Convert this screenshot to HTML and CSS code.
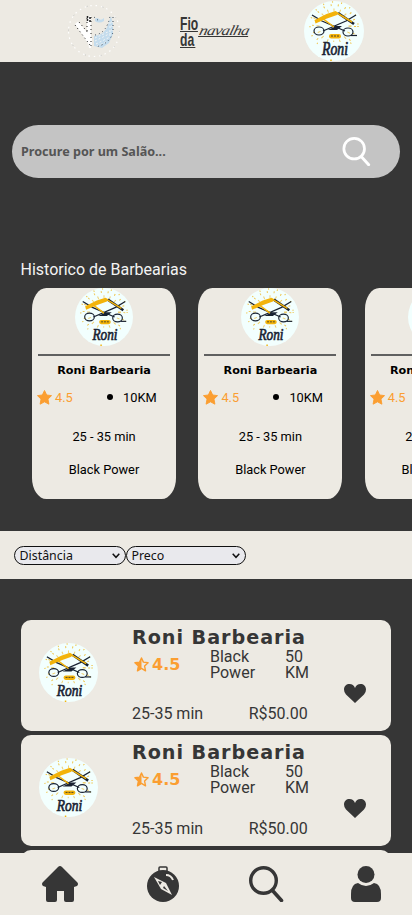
FILE: index.html
```html
<!DOCTYPE html>
<html lang="pt-BR">
<head>
<meta charset="utf-8">
<meta name="viewport" content="width=device-width, initial-scale=1">
<title>Fio da navalha</title>
<link rel="stylesheet" href="styles.css">
</head>
<body>
<svg class="defs" aria-hidden="true">
  <symbol id="roni" viewBox="0 0 60 60">
    <circle cx="30" cy="30" r="30" fill="#f2fffe"/>
    <g fill="none" stroke="#efb51e">
      <circle cx="30" cy="25" r="16" stroke-width="3" stroke-dasharray="1 5.2" opacity=".65"/>
      <circle cx="30" cy="25" r="21" stroke-width="2" stroke-dasharray="1 6.3" opacity=".8"/>
      <circle cx="30" cy="25" r="24" stroke-width="1.5" stroke-dasharray="1 8.2" opacity=".8"/>
    </g>
    <path d="M14 41h32v15H14z" fill="#f2fffe"/>
    <path d="M8 14l10 6 23 10M52 14l-10 6-23 10" fill="none" stroke="#182232" stroke-width="1.3"/>
    <path d="M24 29l8-4 6 0-5 4z" fill="#182232"/>
    <path d="M18 17l12 9" stroke="#f3b30a" stroke-width="1.500"/>
    <path d="M10.500 19l12-6 9-3 2.500 1.500-1 2.500-10 3.500-11.500 5z" fill="#f3b30a"/>
    <path d="M34 12l16 11" stroke="#182232" stroke-width="2.600"/>
    <path d="M33 12l15 9" stroke="#f3b30a" stroke-width="1.500"/>
    <g fill="none" stroke="#182232" stroke-width="1.200"><ellipse cx="15" cy="30" rx="5" ry="4"/><ellipse cx="44" cy="31" rx="5" ry="4"/><path d="M47 34.500h6"/></g>
    <rect x="25" y="33" width="12" height="4.500" rx="2.200" fill="#f3b30a"/>
    <path d="M27 35h8" stroke="#4c4525" stroke-width="1" stroke-dasharray="2 1"/>
    <path d="M27 58.500v1.500" stroke="#f3b30a" stroke-width="1.500"/>
    <text x="18" y="54" textLength="26" lengthAdjust="spacingAndGlyphs" font-family="Liberation Serif, serif" font-size="18" font-weight="400" font-style="italic" fill="#182232" stroke="#182232" stroke-width=".7">Roni</text>
  </symbol>
  <symbol id="star" viewBox="0 0 16 16"><path d="M8 .5l2.300 4.800 5.200.7-3.800 3.700 1 5.400L8 12.600l-4.700 2.500 1-5.400L.5 6l5.200-.7z" fill="#fb9e31" stroke="#fb9e31" stroke-linejoin="round"/></symbol>
  <symbol id="halfstar" viewBox="0 0 16 16"><path d="M8 1l2 4.500 5 .7-3.700 3.500 1 5L8 12.200l-4.300 2.500 1-5L1 6.200l5-.7z" fill="none" stroke="#fb9e31" stroke-width="1.500" stroke-linejoin="round"/><path d="M8 1v11.200l-4.300 2.500 1-5L1 6.200l5-.7z" fill="#fb9e31"/></symbol>
  <symbol id="heart" viewBox="0 0 22 19"><path d="M11 19L2 10.500Q0 8.500 0 5.500C0 2 2.500 0 5.500 0Q9.500 0 11 4q1.500-4 5.500-4C19.500 0 22 2 22 5.500q0 3-2 5z" fill="#363636"/></symbol>
  <symbol id="search" viewBox="0 0 36 36"><circle cx="14.500" cy="14.500" r="12.800" fill="none" stroke="currentColor" stroke-width="3.400"/><path d="M23.500 24.500l9 10" stroke="currentColor" stroke-width="3.600" stroke-linecap="round"/></symbol>
  <symbol id="chevron" viewBox="0 0 8 6"><path d="M.7.8L4 4.300 7.300.8" fill="none" stroke="#111" stroke-width="1.500"/></symbol>
</svg>

<header class="top">
  <svg class="emblem" viewBox="0 0 54 54">
    <circle cx="27" cy="27" r="25.500" fill="none" stroke="#fff" stroke-width="1.200" stroke-dasharray="1.500 4"/>
    <circle cx="27" cy="27" r="25.500" fill="none" stroke="#c3c5c6" stroke-dasharray="1 15"/>
    <path d="M8 20l3-2.500L25 34v8l-2 0z" fill="#fff"/>
    <path d="M20 13l4-1v32h-2l-2-18z" fill="#fff"/>
    <path d="M8 21l15 20M12 18l10 12M20 14v13M24 13v31" fill="none" stroke="#222" stroke-dasharray="1 3"/>
    <path d="M20.500 12v6M23 13v5" stroke="#222" stroke-width="1.500" stroke-dasharray="2 1"/>
    <path d="M27 32q11-1 14-11l3-9 2 8v10l-4 9-7 5-8-2z" fill="#c4dced"/>
    <path d="M28 15q2-2 4 0t5-1v3q-5 3-9 0z" fill="#c4dced"/>
    <path d="M28 34l15-7M28 37l16-8M29 40l14-7M30 42l9-4M43 18v14M45 17v10" stroke="#f1f4f5" stroke-dasharray="2 2"/>
    <path d="M28 31q12-2 15-19M46 13v15q-3 12-18 15M27 13l5 4" fill="none" stroke="#354657" stroke-dasharray="1 3"/>
  </svg>
  <div class="brand"><div class="brand-fio"><span>Fio</span><span class="da">da</span></div><span class="brand-navalha">navalha</span></div>
  <svg class="avatar"><use href="#roni"/></svg>
</header>

<main>
  <div class="search"><span>Procure por um Salão...</span><svg><use href="#search"/></svg></div>
  <h2>Historico de Barbearias</h2>
  <section class="history">
    <article class="shop"><svg class="shop-logo"><use href="#roni"/></svg><hr><h3>Roni Barbearia</h3><div class="meta"><svg><use href="#star"/></svg><span class="rate">4.5</span><i></i><span>10KM</span></div><p class="time">25 - 35 min</p><p>Black Power</p></article>
    <article class="shop"><svg class="shop-logo"><use href="#roni"/></svg><hr><h3>Roni Barbearia</h3><div class="meta"><svg><use href="#star"/></svg><span class="rate">4.5</span><i></i><span>10KM</span></div><p class="time">25 - 35 min</p><p>Black Power</p></article>
    <article class="shop"><svg class="shop-logo"><use href="#roni"/></svg><hr><h3>Roni Barbearia</h3><div class="meta"><svg><use href="#star"/></svg><span class="rate">4.5</span><i></i><span>10KM</span></div><p class="time">25 - 35 min</p><p>Black Power</p></article>
  </section>
  <div class="filters">
    <div class="select distance"><span>Distância</span><svg><use href="#chevron"/></svg></div>
    <div class="select price"><span>Preco</span><svg><use href="#chevron"/></svg></div>
  </div>
  <section class="list">
    <article class="row"><svg class="row-logo"><use href="#roni"/></svg><div class="info"><h3>Roni Barbearia</h3><div class="line"><div class="score"><svg><use href="#halfstar"/></svg>4.5</div><span class="style">Black Power</span><span class="km">50 KM</span></div><div class="bottom"><span class="duration">25-35 min</span><span>R$50.00</span></div></div><svg class="heart"><use href="#heart"/></svg></article>
    <article class="row"><svg class="row-logo"><use href="#roni"/></svg><div class="info"><h3>Roni Barbearia</h3><div class="line"><div class="score"><svg><use href="#halfstar"/></svg>4.5</div><span class="style">Black Power</span><span class="km">50 KM</span></div><div class="bottom"><span class="duration">25-35 min</span><span>R$50.00</span></div></div><svg class="heart"><use href="#heart"/></svg></article>
    <article class="row"></article>
  </section>
</main>

<nav>
  <svg viewBox="0 0 36 36"><path d="M16 1q2-2 4 0l15 15q2 2 0 4l-3 1v13q0 2-2 2h-6q-2 0-2-2v-9h-7v9q0 2-2 2H6q-2 0-2-2V21l-3-1q-2-2 0-4z" fill="#363636"/></svg>
  <svg class="nav-compass" viewBox="0 0 36 36"><circle cx="18" cy="20" r="16" fill="#363636"/><path d="M14 5V2q0-1 1-1h6q1 0 1 1v3" fill="none" stroke="#363636" stroke-width="1.500"/><path d="M9 11l12 6 6 12-11-6z" fill="#edeae3"/><path d="M13 15l4 1-2 3zM19 20l4 5-5-3z" fill="#363636"/><path d="M21 9q5 0 7 5" fill="none" stroke="#edeae3" stroke-width="2"/></svg>
  <svg class="nav-search"><use href="#search"/></svg>
  <svg viewBox="0 0 36 36"><circle cx="18" cy="8.500" r="8.500" fill="#363636"/><path d="M10 17q8 6 16 0 7 1 7 11v4q0 4-4 4H7q-4 0-4-4v-4q0-10 7-11z" fill="#363636"/></svg>
</nav>
</body>
</html>
```
FILE: styles.css
```css
* { box-sizing: border-box; }
html, body { margin: 0; height: 915px; overflow: hidden; }
body { background: #363636; color: #363636; font-family: Roboto, sans-serif; font-size: 16px; }
h2, h3, p { margin: 0; font-weight: 400; }
svg { display: block; flex: none; }
.defs { position: absolute; width: 0; height: 0; }

main { height: 791px; overflow: hidden; padding-top: 63px; }

.top { display: flex; height: 62px; background: #edeae3; padding-left: 67px; }
.emblem { width: 54px; height: 54px; margin-top: 4px; }
.brand { display: flex; width: 69px; margin: 16px 0 0 59px; }
.brand-fio { width: 18px; font: 700 19px/16px "Liberation Sans Narrow", "Liberation Sans", sans-serif; transform: scaleX(.64); transform-origin: left; }
.brand-fio span { display: block; width: 28px; height: 15.500px; border-bottom: 1px solid #363636; }
.brand-fio .da { width: 24px; height: 16px; }
.brand-navalha { width: 42px; height: 19px; margin-top: 2px; border-bottom: 1px solid #363636; font: italic 14px/25px "Liberation Serif", serif; letter-spacing: -.5px; transform: scaleX(1.19) skewX(-12deg); transform-origin: left bottom; }
.avatar { width: 60px; height: 60px; margin: 1px 0 0 55px; }

.search { display: flex; align-items: center; justify-content: space-between; height: 53px; margin: 0 12px; padding: 0 28px 0 9px; border-radius: 27px; background: #c4c4c4; color: #555; font: 700 12.600px "Noto Sans", sans-serif; }
.search svg { width: 30px; height: 29px; color: #fff; }
h2 { margin: 82px 0 0 20.500px; font-size: 16px; line-height: 19px; color: #f3f3f3; }

.history { display: flex; gap: 22.400px; margin: 9px 0 0 32px; overflow: hidden; }
.shop { display: flex; flex: none; flex-direction: column; align-items: center; width: 144px; height: 211px; border-radius: 10%; background: #edeae3; color: #000; font-size: 12.800px; line-height: 15px; }
.shop-logo { width: 58px; height: 58px; }
.shop hr { width: 132px; height: 2px; margin: 8px 0 8px; border: 0; background: #606060; }
.shop h3 { font: 700 11.200px/14px "DejaVu Sans", sans-serif; }
.meta { display: flex; align-items: center; width: 100%; height: 16px; margin-top: 11px; padding-left: 5px; }
.meta svg { width: 15px; height: 15px; }
.rate { width: 18px; margin-left: 3px; color: #fb9e31; }
.meta i { width: 6px; height: 6px; margin: 0 10px 0 34px; border-radius: 50%; background: #000; }
.time { margin: 24px 0 18px; }

.filters { display: flex; height: 48px; margin-top: 32px; padding: 15px 0 0 14px; background: #edeae3; }
.select { display: flex; align-items: center; justify-content: space-between; height: 19px; padding: 0 5px 0 4.500px; border: 1px solid #111; border-radius: 10px; background: #e9e9ed; color: #111; font: 12.400px/17px "Noto Sans", sans-serif; }
.select svg { width: 8px; height: 6px; }
.distance { width: 112px; }
.price { width: 120px; }

.list { display: flex; flex-direction: column; gap: 4px; margin: 41px 21px 0; }
.row { display: flex; flex: none; height: 111px; border-radius: 10px; background: #edeae3; }
.row-logo { width: 59px; height: 59px; margin: 23px 0 0 18px; }
.info { width: 200px; margin-left: 34px; padding-top: 7px; }
.info h3 { font: 700 19.200px/22px "DejaVu Sans", sans-serif; letter-spacing: .95px; white-space: nowrap; }
.line { display: flex; height: 34px; line-height: 16px; }
.score { display: flex; align-items: center; gap: 3px; width: 78px; height: 30px; padding-left: 2px; color: #fb9e31; font: 700 16px "DejaVu Sans", sans-serif; }
.score svg { width: 15px; height: 15px; }
.style { width: 50px; margin-right: 25px; }
.km { width: 30px; }
.bottom { display: flex; margin-top: 21px; line-height: 19px; }
.duration { width: 116.700px; }
.heart { width: 22px; height: 19px; margin: 64px 0 0 12px; }

nav { display: flex; justify-content: space-between; height: 62px; padding: 13px 28px 0 42px; background: #edeae3; color: #363636; }
nav svg { width: 36px; height: 36px; }
nav .nav-compass { margin: 0 -1px 0 1px; }
nav .nav-search { margin: 0 -3px 0 3px; }
```
